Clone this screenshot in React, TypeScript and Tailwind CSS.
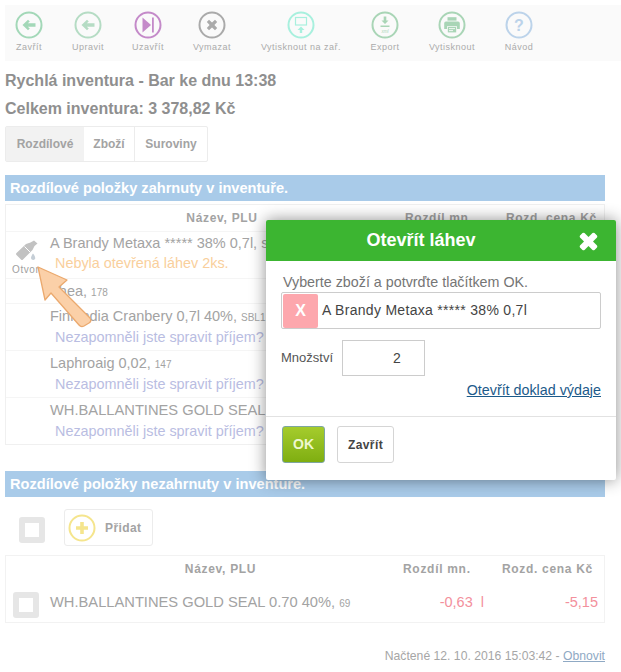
const font = "[font-family:'Liberation_Sans',Arial,sans-serif]";

function CircleIcon({ color, children }: { color: string; children: React.ReactNode }) {
  return (
    <svg width="28" height="28" viewBox="0 0 28 28" fill="none">
      <circle cx="14" cy="14" r="12.5" stroke={color} strokeWidth="2" />
      {children}
    </svg>
  );
}

function ArrowLeft({ color }: { color: string }) {
  return (
    <CircleIcon color={color}>
      <path d="M7.5 14 L13 8.8 L14.8 10.6 L12.8 12.3 H20.5 V15.7 H12.8 L14.8 17.4 L13 19.2 Z" fill={color} />
    </CircleIcon>
  );
}

const tools = [
  { label: 'Zavřít', w: 'w-[48px]', icon: <ArrowLeft color="#a3d8b8" /> },
  { label: 'Upravit', w: 'w-[70px]', icon: <ArrowLeft color="#b5dcc4" /> },
  {
    label: 'Uzavřít',
    w: 'w-[50px]',
    icon: (
      <CircleIcon color="#c48ac9">
        <path d="M8.5 6.5 L17 14 L8.5 21.5 Z" fill="#c48ac9" />
        <rect x="18" y="6.5" width="1.8" height="15" fill="#c48ac9" />
      </CircleIcon>
    ),
  },
  {
    label: 'Vymazat',
    w: 'w-[78px]',
    icon: (
      <CircleIcon color="#aaaaaa">
        <path d="M11 8.8 L14 11.6 L17 8.8 L19.2 11 L16.4 14 L19.2 17 L17 19.2 L14 16.4 L11 19.2 L8.8 17 L11.6 14 L8.8 11 Z" fill="#aaaaaa" />
      </CircleIcon>
    ),
  },
  {
    label: 'Vytisknout na zař.',
    w: 'w-[100px]',
    icon: (
      <CircleIcon color="#a8f0de">
        <rect x="8.5" y="6.5" width="11" height="7.5" stroke="#a8f0de" strokeWidth="1.2" />
        <path d="M14 15.5 L17.5 19 H15.2 V22 H12.8 V19 H10.5 Z" fill="#a8f0de" />
      </CircleIcon>
    ),
  },
  {
    label: 'Export',
    w: 'w-[68px]',
    icon: (
      <CircleIcon color="#a9d5b6">
        <path d="M12.7 5.5 H15.3 V9.5 H17.5 L14 13 L10.5 9.5 H12.7 Z" fill="#a9d5b6" />
        <rect x="9.5" y="14.5" width="9" height="1.5" fill="#a9d5b6" />
        <text x="14" y="21.5" textAnchor="middle" fontSize="4.5" fontStyle="italic" fill="#a9d5b6" fontFamily="Liberation Sans">xml</text>
      </CircleIcon>
    ),
  },
  {
    label: 'Vytisknout',
    w: 'w-[66px]',
    icon: (
      <CircleIcon color="#a9d5b6">
        <rect x="9.5" y="6.2" width="9" height="3.4" fill="#a9d5b6" />
        <path d="M8 10.4 H20 Q21.8 10.4 21.8 12.2 V18 H19 V15.2 H9 V18 H6.2 V12.2 Q6.2 10.4 8 10.4 Z" fill="#a9d5b6" />
        <rect x="9.8" y="16" width="8.4" height="5.4" fill="#a9d5b6" />
        <rect x="11" y="17.2" width="6" height="0.9" fill="#fafafa" />
        <rect x="11" y="19.2" width="4" height="0.9" fill="#fafafa" />
      </CircleIcon>
    ),
  },
  {
    label: 'Návod',
    w: 'w-[68px]',
    icon: (
      <CircleIcon color="#bcd3ea">
        <text x="14" y="19.5" textAnchor="middle" fontSize="16" fontWeight="bold" fill="#bcd3ea" fontFamily="Liberation Sans">?</text>
      </CircleIcon>
    ),
  },
];

function Toolbar() {
  return (
    <div className="flex h-[56px] bg-[#fafafa] pt-[6px]">
      {tools.map((t) => (
        <div key={t.label} className={`${t.w} flex shrink-0 flex-col items-center`}>
          {t.icon}
          <span className="mt-[2px] whitespace-nowrap text-[9px] leading-[12px] tracking-[0.5px] text-[#ababab]">{t.label}</span>
        </div>
      ))}
    </div>
  );
}

function SectionHead({ children }: { children: React.ReactNode }) {
  return <div className="h-[26px] whitespace-nowrap bg-[#a9cbe9] pl-[5px] text-[14.6px] font-bold leading-[26px] text-white">{children}</div>;
}

function TableHead({ nameCls, priceCls }: { nameCls: string; priceCls: string }) {
  return (
    <div className="flex h-[26px] items-center whitespace-nowrap text-[12px] font-bold tracking-[0.7px] text-[#a3a3a3]">
      <div className={`text-center ${nameCls}`}>Název, PLU</div>
      <div>Rozdíl mn.</div>
      <div className={`flex-1 text-right ${priceCls}`}>Rozd. cena Kč</div>
    </div>
  );
}

function HintRow({ name, plu, hint, nameCls }: { name: string; plu: string; hint: string; nameCls: string }) {
  return (
    <div className="h-[47px] overflow-hidden whitespace-nowrap border-t border-[#f5f5f5] pl-[44px] pt-[3px] leading-[19px] text-[#a3a3a3]">
      <div className={nameCls}>
        {name}, <span className="text-[10px]">{plu}</span>
      </div>
      <div className="pl-[5px] text-[14.4px] leading-[21px] text-[#b9bde2]">{hint}</div>
    </div>
  );
}

function Checkbox() {
  return <div className="size-[26px] shrink-0 rounded-[3px] border-[6px] border-[#e6e6e6] bg-white" />;
}

function Modal() {
  return (
    <div className="absolute left-[266px] top-[220px] h-[260px] w-[350px] rounded-[2px] bg-white shadow-[0_0_16px_rgba(0,0,0,0.45)]">
      <div className="relative flex h-[41px] items-center justify-center rounded-t-[2px] bg-[#3cb531] pr-[40px] text-[18px] font-bold text-white">
        Otevřít láhev
        <svg className="absolute right-[18px] top-[12px]" width="19" height="19" viewBox="0 0 19 19">
          <path d="M5.5 1 L9.5 5 L13.5 1 Q14.5 0.3 15.5 1 L18 3.5 Q18.7 4.5 18 5.5 L14 9.5 L18 13.5 Q18.7 14.5 18 15.5 L15.5 18 Q14.5 18.7 13.5 18 L9.5 14 L5.5 18 Q4.5 18.7 3.5 18 L1 15.5 Q0.3 14.5 1 13.5 L5 9.5 L1 5.5 Q0.3 4.5 1 3.5 L3.5 1 Q4.5 0.3 5.5 1 Z" fill="white" />
        </svg>
      </div>
      <div className="px-[15px] pt-[11px]">
        <div className="pl-[2px] text-[14.3px] leading-[20px] text-[#757575]">Vyberte zboží a potvrďte tlačítkem OK.</div>
        <div className="flex h-[37px] w-[320px] items-center rounded-[2px] border border-[#cccccc] pl-[1px]">
          <div className="flex h-[34px] w-[35px] items-center justify-center rounded-[2px] bg-[#fda7ad] text-[16px] font-bold text-white">X</div>
          <span className="ml-[4px] text-[14px] tracking-[0.3px] text-[#444444]">A Brandy Metaxa ***** 38% 0,7l</span>
        </div>
        <div className="mt-[11px] flex items-center">
          <span className="w-[61px] text-[13px] text-[#555555]">Množství</span>
          <div className="flex h-[36px] w-[83px] items-center justify-center border border-[#cccccc] pl-[27px] text-[14px] text-[#444444]">2</div>
        </div>
        <div className="mt-[4px] text-right text-[14.3px] leading-[20px]">
          <span className="text-[#1c5a8a] underline">Otevřít doklad výdaje</span>
        </div>
      </div>
      <div className="mt-[16px] flex gap-[12px] border-t border-[#e2e2e2] pl-[16px] pt-[9px]">
        <div className="flex h-[37px] w-[43px] items-center justify-center rounded-[3px] border border-[#7ea6a0] bg-gradient-to-b from-[#a5cc2c] to-[#7fae10] text-[14px] font-bold text-[#eef7d0]">OK</div>
        <div className="flex h-[37px] w-[57px] items-center justify-center rounded-[3px] border border-[#d5d5d5] text-[12px] font-bold tracking-[0.4px] text-[#444444]">Zavřít</div>
      </div>
    </div>
  );
}

export default function App() {
  return (
    <div className={`relative h-[672px] w-[621px] overflow-hidden bg-white ${font}`}>
      <div className="pl-[5px] pt-[5px]">
        <Toolbar />
      </div>
      <div className="px-[5px]">
        <div className="mt-[10px] text-[16px] font-bold leading-[20px] text-[#8f8f8f]">Rychlá inventura - Bar ke dnu 13:38</div>
        <div className="mt-[8px] text-[16px] font-bold leading-[20px] text-[#8f8f8f]">Celkem inventura: 3 378,82 Kč</div>

        <div className="mt-[7px] flex h-[36px] w-[203px] rounded-[2px] border border-[#ececec] text-[12px] font-bold text-[#a3a3a3]">
          <div className="flex w-[78px] items-center justify-center bg-[#f2f2f2]">Rozdílové</div>
          <div className="flex w-[51px] items-center justify-center border-r border-[#ececec]">Zboží</div>
          <div className="flex flex-1 items-center justify-center">Suroviny</div>
        </div>

        <div className="mt-[13px] w-[600px]">
          <SectionHead>Rozdílové položky zahrnuty v inventuře.</SectionHead>
          <div className="mt-[3px] border border-[#f0f0f0]">
            <TableHead nameCls="w-[399px] pl-[33px]" priceCls="pr-[7px]" />
            <div className="relative flex h-[47px] whitespace-nowrap border-t border-[#f5f5f5] leading-[19px]">
              <div className="flex w-[44px] flex-col pl-[6px] pt-[8px]">
                <svg className="ml-[3px]" width="24" height="22" viewBox="0 0 24 22" fill="#c2c2c2">
                  <path d="M19 0.5 L22.5 3.5 L19.5 6 L17.5 10 L8 19.5 Q7 20.5 6 19.5 L1.5 15 Q0.5 14 1.5 13 L11 4 L15.5 2.5 Z" />
                  <path d="M9.5 6.5 L15 12" stroke="white" strokeWidth="1" />
                  <path d="M18 13.5 Q21 17 20 19 Q18.5 20.7 16.5 19.3 Q15 17.5 18 13.5 Z" fill="#c5ced6" />
                </svg>
                <span className="mt-[2px] text-[10px] leading-[11px] tracking-[0.6px] text-[#a0a0a0]">Otvor</span>
              </div>
              <div className="pt-[2px]">
                <div className="text-[14.5px] text-[#a3a3a3]">A Brandy Metaxa ***** 38% 0,7l, s</div>
                <div className="pl-[5px] text-[14.4px] leading-[21px] text-[#f9cf9c]">Nebyla otevřená láhev 2ks.</div>
              </div>
            </div>
            <div className="h-[25px] whitespace-nowrap border-t border-[#f5f5f5] pl-[44px] text-[14.5px] leading-[24px] text-[#a3a3a3]">
              Thea, <span className="text-[10px]">178</span>
            </div>
            <HintRow name="Finlandia Cranbery 0,7l 40%" plu="SBL1" hint="Nezapomněli jste spravit příjem?" nameCls="text-[14.5px]" />
            <HintRow name="Laphroaig 0,02" plu="147" hint="Nezapomněli jste spravit příjem?" nameCls="text-[14.5px]" />
            <HintRow name="WH.BALLANTINES GOLD SEAL 0.70 40%" plu="69" hint="Nezapomněli jste spravit příjem?" nameCls="text-[14.7px]" />
          </div>
        </div>

        <div className="mt-[26px] w-[600px]">
          <SectionHead>Rozdílové položky nezahrnuty v inventuře.</SectionHead>
          <div className="mt-[12px] flex items-start pl-[14px]">
            <div className="mt-[8px]">
              <Checkbox />
            </div>
            <div className="ml-[19px] flex h-[37px] w-[89px] items-center rounded-[3px] border border-[#ececec] pl-[3px]">
              <svg width="28" height="28" viewBox="0 0 28 28" fill="none">
                <circle cx="14" cy="14" r="12.5" stroke="#f5e58d" strokeWidth="2" />
                <path d="M12.2 8 H15.8 V12.2 H20 V15.8 H15.8 V20 H12.2 V15.8 H8 V12.2 H12.2 Z" fill="#f5e58d" />
              </svg>
              <span className="ml-[9px] text-[12px] font-bold tracking-[0.4px] text-[#a3a3a3]">Přidat</span>
            </div>
          </div>
          <div className="mt-[9px] border border-[#f2f2f2]">
            <TableHead nameCls="w-[397px] pl-[32px]" priceCls="pr-[11px]" />
            <div className="flex h-[40px] items-start whitespace-nowrap pl-[7px] leading-[41px] text-[#a3a3a3]">
              <div className="mt-[10px]">
                <Checkbox />
              </div>
              <span className="ml-[11px] w-[368px] text-[14.7px]">
                WH.BALLANTINES GOLD SEAL 0.70 40%, <span className="text-[10px]">69</span>
              </span>
              <span className="w-[66px] text-right text-[14.5px] text-[#f3909c]">-0,63&nbsp;&nbsp;l</span>
              <span className="flex-1 pr-[6px] text-right text-[14.5px] text-[#f3909c]">-5,15</span>
            </div>
          </div>
        </div>

        <div className="mt-[26px] w-[600px] text-right text-[12.2px] leading-[14px] text-[#a6a6a6]">
          Načtené 12. 10. 2016 15:03:42 - <span className="text-[#8fa9c4] underline">Obnovit</span>
        </div>
      </div>

      <Modal />

      <svg className="absolute left-[30px] top-[260px]" width="70" height="75" viewBox="0 0 70 75">
        <path d="M8 7 L37 20 L29 27 L60 58 Q62 61 59 63 L54 66 Q51 67.5 49 65 L21 33 L15 40 Z" fill="#fbd0a8" stroke="#eba96e" strokeWidth="1.3" strokeLinejoin="round" />
      </svg>
    </div>
  );
}
